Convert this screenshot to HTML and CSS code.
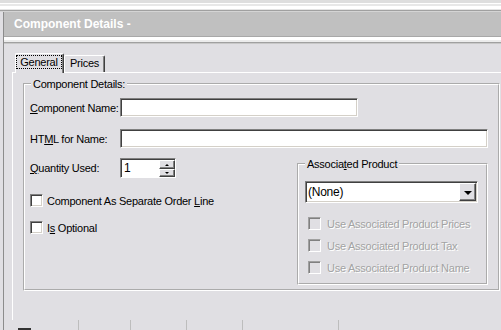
FILE: index.html
```html
<!DOCTYPE html>
<html>
<head>
<meta charset="utf-8">
<title>Component Details</title>
<link rel="stylesheet" href="styles.css">
</head>
<body>
<div class="top"></div>
<div class="shell">
  <div class="header">Component Details -</div>
  <div class="hsep"></div>
  <div class="content">
    <div class="tabs">
      <div class="tab active"><span class="focus">General</span></div>
      <div class="tab">Prices</div>
    </div>
    <div class="panel">
      <fieldset class="group main">
        <legend>Component Details:</legend>
        <div class="row first">
          <span class="lbl"><u>C</u>omponent Name:</span>
          <div class="input w-name"></div>
        </div>
        <div class="row second">
          <span class="lbl">HT<u>M</u>L for Name:</span>
          <div class="input w-html"></div>
        </div>
        <div class="lower">
          <div class="leftcol">
            <div class="row">
              <span class="lbl"><u>Q</u>uantity Used:</span>
              <div class="spin">
                <span class="val">1</span>
                <div class="btns">
                  <span class="sbtn"><i class="up"></i></span>
                  <span class="sbtn"><i class="down"></i></span>
                </div>
              </div>
            </div>
            <div class="check c1"><span class="box"></span><span class="ctext">Component As Separate Order <u>L</u>ine</span></div>
            <div class="check c2"><span class="box"></span><span class="ctext">I<u>s</u> Optional</span></div>
          </div>
          <fieldset class="group assoc">
            <legend>Associa<u>t</u>ed Product</legend>
            <div class="select">
              <span class="sval">(None)</span>
              <span class="dbtn"><i class="down big"></i></span>
            </div>
            <div class="check dis d1"><span class="box"></span><span class="ctext">Use Associated Product Prices</span></div>
            <div class="check dis"><span class="box"></span><span class="ctext">Use Associated Product Tax</span></div>
            <div class="check dis"><span class="box"></span><span class="ctext">Use Associated Product Name</span></div>
          </fieldset>
        </div>
      </fieldset>
    </div>
    <div class="footer">
      <span class="fmark"></span>
      <span class="tick t1"></span>
      <span class="tick t2"></span>
      <span class="tick t3"></span>
      <span class="tick t4"></span>
      <span class="tick t5"></span>
    </div>
  </div>
</div>
</body>
</html>
```

FILE: styles.css
```css
* { box-sizing: border-box; }
html, body { margin: 0; padding: 0; }
body {
  width: 501px;
  height: 330px;
  overflow: hidden;
  background: #e0dfe3;
  font-family: "Liberation Sans", Arial, sans-serif;
  font-size: 11px;
  letter-spacing: -0.25px;
  color: #000;
}
u { text-decoration: underline; text-underline-offset: 1px; }

.top {
  height: 12px;
  background: linear-gradient(to bottom,
    #dedede 0, #dedede 3px, #fff 3px, #fff 4px, #e8e8e8 4px, #e8e8e8 6px,
    #fff 6px, #fff 9px, #e4e4e4 9px, #e4e4e4 10px, #a0a0a0 10px, #a0a0a0 11px,
    #d4d4d4 11px);
}
.shell {
  margin-left: 3px;
  border-left: 1px solid #8c8c8c;
  height: 318px;
}
.header {
  height: 25px;
  background: #c0c0c0;
  border-bottom: 1px solid #a8a8a8;
  color: #fff;
  font-weight: bold;
  font-size: 12px;
  letter-spacing: 0;
  line-height: 24px;
  padding-left: 10px;
}
.hsep {
  height: 7px;
  background: linear-gradient(to bottom,
    #fff 0, #fff 3px, #ececec 3px, #ececec 5px, #a0a0a0 5px, #a0a0a0 6px, #c8c8c8 6px);
}
.content { padding: 9px 0 0 8px; }

.tabs {
  display: flex;
  align-items: flex-end;
  height: 19px;
  padding-left: 3px;
}
.tab {
  height: 17px;
  width: 41px;
  padding-left: 5px;
  border: 1px solid;
  border-color: #fff #404040 transparent #fff;
  border-bottom: none;
  border-radius: 2px 2px 0 0;
  box-shadow: inset -1px 0 0 #808080;
  line-height: 15px;
  white-space: nowrap;
}
.tab.active {
  position: relative;
  z-index: 1;
  height: 20px;
  width: 49px;
  margin-bottom: -1px;
  padding: 1px 1px 0 0;
  background: #e0dfe3;
}
.focus {
  display: block;
  width: 46px;
  height: 14px;
  border: 1px dotted #000;
  text-align: center;
  line-height: 12px;
}

.panel {
  width: 500px;
  height: 248px;
  border-top: 1px solid #fff;
  border-left: 1px solid #fff;
  padding: 4px 0 0 10px;
}

.group {
  margin: 0;
  border: 2px groove #fff;
  min-width: 0;
}
.group legend {
  padding: 0 2px;
  line-height: 14px;
}
.main {
  width: 477px;
  height: 214px;
  padding: 0 5px;
}
.main > legend { margin-left: 1px; }

.row {
  display: flex;
  align-items: center;
  height: 19px;
}
.row.first { margin-top: 7px; }
.row.second { margin-top: 12px; }
.lbl { width: 90px; white-space: nowrap; }

.input {
  height: 19px;
  background: #fff;
  border: 1px solid;
  border-color: #808080 #fff #fff #808080;
  box-shadow: inset 1px 1px 0 #404040, inset -1px -1px 0 #d4d0c8;
}
.w-name { width: 238px; }
.w-html { width: 368px; }

.lower {
  display: flex;
  align-items: flex-start;
  margin-top: 10px;
}
.leftcol { width: 267px; }
.leftcol .row { height: 20px; }

.spin {
  display: flex;
  width: 56px;
  height: 20px;
  background: #fff;
  border: 1px solid;
  border-color: #808080 #fff #fff #808080;
  box-shadow: inset 1px 1px 0 #404040;
}
.val { flex: 1; padding: 1px 0 0 3px; line-height: 17px; font-size: 12px; }
.btns {
  display: flex;
  flex-direction: column;
  width: 16px;
  padding-top: 1px;
}
.sbtn, .dbtn {
  display: flex;
  align-items: center;
  justify-content: center;
  background: #e0dfe3;
  border: 1px solid;
  border-color: #fff #404040 #404040 #fff;
  box-shadow: inset -1px -1px 0 #808080;
}
.sbtn { height: 9px; }
.sbtn + .sbtn { height: 8px; }
.up, .down {
  display: block;
  width: 0;
  height: 0;
  border-left: 2px solid transparent;
  border-right: 2px solid transparent;
}
.up { border-bottom: 2px solid #000; }
.down { border-top: 2px solid #000; }
.down.big {
  border-left-width: 4px;
  border-right-width: 4px;
  border-top-width: 4px;
  margin-top: 1px;
}

.check {
  display: flex;
  align-items: center;
  height: 13px;
  white-space: nowrap;
}
.ctext { white-space: pre; }
.box {
  width: 13px;
  height: 13px;
  margin-right: 4px;
  background: #fff;
  border: 1px solid;
  border-color: #808080 #fff #fff #808080;
  box-shadow: inset 1px 1px 0 #404040, inset -1px -1px 0 #d4d0c8;
  flex: none;
}
.c1 { margin-top: 16px; }
.c2 { margin-top: 14px; }

.assoc {
  width: 191px;
  margin-top: -1px;
  padding: 0 6px 9px 6px;
}
.select {
  display: flex;
  align-items: stretch;
  width: 173px;
  height: 22px;
  margin-top: 10px;
  background: #fff;
  border: 1px solid;
  border-color: #808080 #fff #fff #808080;
  box-shadow: inset 1px 1px 0 #404040, inset -1px -1px 0 #d4d0c8;
  padding: 1px;
}
.sval { flex: 1; padding-left: 1px; line-height: 18px; font-size: 12px; }
.dbtn { width: 17px; }
.check.dis { margin-left: 3px; margin-top: 9px; color: #a3a3a3; text-shadow: 1px 1px 0 #fff; }
.check.dis.d1 { margin-top: 14px; }
.dis .box {
  background: #e0dfe3;
  border-color: #a0a0a0 #fff #fff #a0a0a0;
  box-shadow: inset 1px 1px 0 #808080, inset -1px -1px 0 #e0dfe3;
  margin-right: 6px;
}

.footer {
  display: flex;
  height: 10px;
}
.fmark {
  width: 13px;
  height: 2px;
  margin: 8px 0 0 6px;
  background: #333;
}
.tick {
  width: 1px;
  height: 10px;
  background: #bdbdbd;
}
.t1 { margin-left: 47px; }
.t2 { margin-left: 51px; }
.t3 { margin-left: 55px; }
.t4 { margin-left: 55px; }
.t5 { margin-left: 95px; }
```
